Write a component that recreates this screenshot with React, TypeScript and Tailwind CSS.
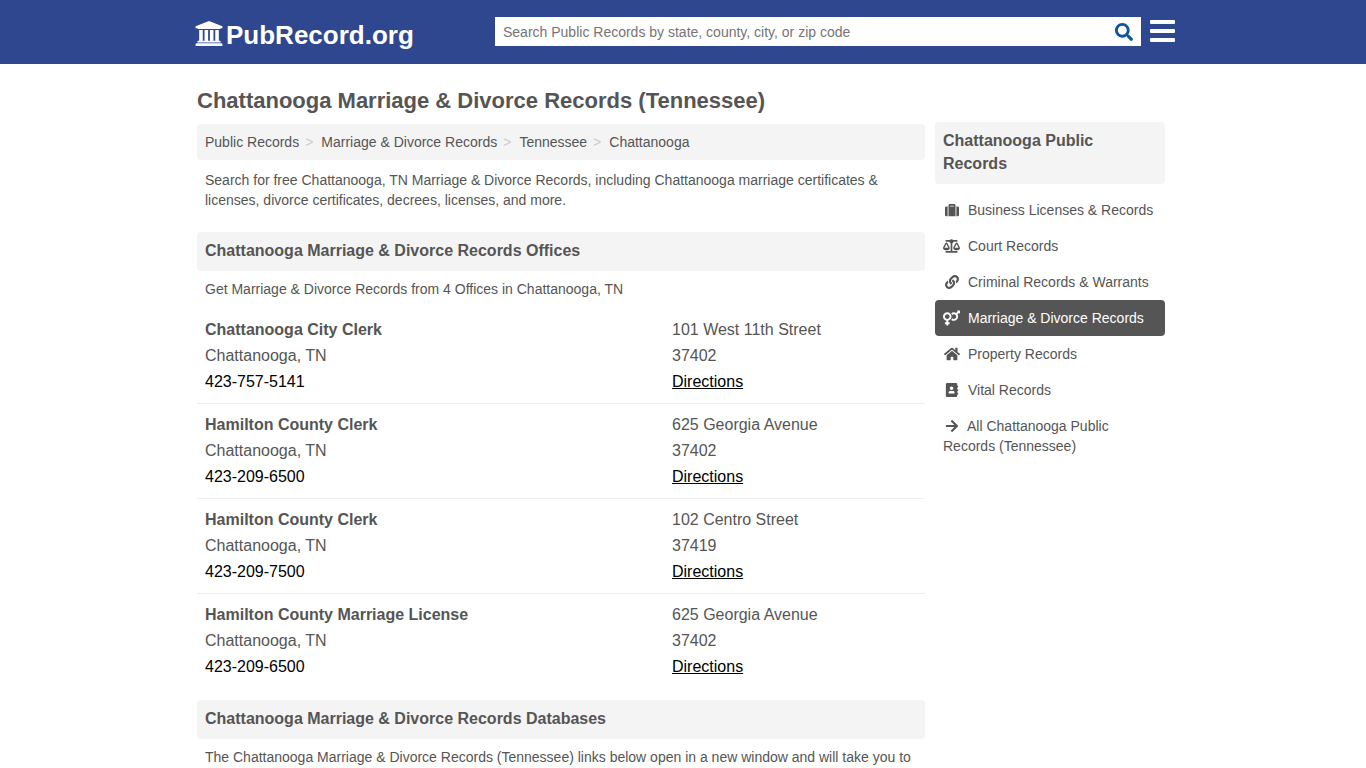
import React from "react";
import type { IconType } from "react-icons";
import {
  FaAddressBook,
  FaArrowRight,
  FaBalanceScale,
  FaHome,
  FaLink,
  FaSearch,
  FaSuitcase,
  FaVenusMars,
} from "react-icons/fa";

type Office = { name: string; phone: string; street: string; zip: string };

const offices: Office[] = [
  { name: "Chattanooga City Clerk", phone: "423-757-5141", street: "101 West 11th Street", zip: "37402" },
  { name: "Hamilton County Clerk", phone: "423-209-6500", street: "625 Georgia Avenue", zip: "37402" },
  { name: "Hamilton County Clerk", phone: "423-209-7500", street: "102 Centro Street", zip: "37419" },
  { name: "Hamilton County Marriage License", phone: "423-209-6500", street: "625 Georgia Avenue", zip: "37402" },
];

const categories: { label: string; icon: IconType; size: string; active?: boolean }[] = [
  { label: "Business Licenses & Records", icon: FaSuitcase, size: "size-[14px]" },
  { label: "Court Records", icon: FaBalanceScale, size: "h-4 w-[17px]" },
  { label: "Criminal Records & Warrants", icon: FaLink, size: "size-[14px]" },
  { label: "Marriage & Divorce Records", icon: FaVenusMars, size: "h-4 w-[17px]", active: true },
  { label: "Property Records", icon: FaHome, size: "size-4" },
  { label: "Vital Records", icon: FaAddressBook, size: "size-[14px]" },
];

const crumbs = ["Public Records", "Marriage & Divorce Records", "Tennessee", "Chattanooga"];

function CourthouseIcon({ className }: { className?: string }) {
  return (
    <svg viewBox="0 0 1920 1792" fill="currentColor" className={className} aria-hidden>
      <path d="M960 0l960 384v128h-128q0 26-20.5 45t-48.5 19h-1526q-28 0-48.5-19t-20.5-45h-128v-128zM256 640h256v768h128v-768h256v768h128v-768h256v768h128v-768h256v768h59q28 0 48.5 19t20.5 45v64h-1664v-64q0-26 20.5-45t48.5-19h59v-768zM1851 1600q28 0 48.5 19t20.5 45v128h-1920v-128q0-26 20.5-45t48.5-19h1782z" />
    </svg>
  );
}

function Header() {
  return (
    <header className="bg-[#2e478f]">
      <div className="mx-auto flex h-16 max-w-[984px] items-start pl-1">
        <a href="#" className="flex w-[300px] shrink-0 items-center gap-[3px] pt-5 text-white">
          <CourthouseIcon className="mb-1 h-[25px] w-7 shrink-0" />
          <span className="text-[26px] leading-[30px] font-bold">PubRecord.org</span>
        </a>
        <form className="mt-[17px] flex h-[29px] min-w-0 flex-1 bg-white" onSubmit={(e) => e.preventDefault()}>
          <input
            type="text"
            aria-label="Search public records"
            placeholder="Search Public Records by state, county, city, or zip code"
            className="min-w-0 flex-1 px-2 text-sm text-[#555] outline-none placeholder:text-[#757575]"
          />
          <button type="submit" aria-label="Search" className="px-2 text-[#0b559f]">
            <FaSearch className="size-[18px]" />
          </button>
        </form>
        <button type="button" aria-label="Menu" className="mt-5 ml-[9px] flex shrink-0 flex-col gap-[5px]">
          <span className="h-1 w-[25px] rounded-[1px] bg-white" />
          <span className="h-1 w-[25px] rounded-[1px] bg-white" />
          <span className="h-1 w-[25px] rounded-[1px] bg-white" />
        </button>
      </div>
    </header>
  );
}

function SectionTitle({ children }: { children: React.ReactNode }) {
  return <h2 className="rounded bg-[#f4f4f4] px-2 pt-[7px] pb-[9px] text-base leading-[23px] font-bold">{children}</h2>;
}

function OfficeRow({ office }: { office: Office }) {
  return (
    <li className="flex border-b border-[#eee] p-2 leading-[26px] last:border-b-0">
      <div className="min-w-0 flex-1">
        <h3 className="font-bold">{office.name}</h3>
        <p>Chattanooga, TN</p>
        <a href={`tel:${office.phone}`} className="text-black">
          {office.phone}
        </a>
      </div>
      <div className="w-[245px] shrink-0">
        <p>{office.street}</p>
        <p>{office.zip}</p>
        <a href="#" className="text-black underline">
          Directions
        </a>
      </div>
    </li>
  );
}

function Sidebar() {
  return (
    <aside className="mt-2 w-[230px] shrink-0">
      <SectionTitle>Chattanooga Public Records</SectionTitle>
      <nav aria-label="Chattanooga Public Records" className="mt-2 text-sm">
        {categories.map(({ label, icon: Icon, size, active }) => (
          <a
            key={label}
            href="#"
            className={
              active
                ? "flex items-center gap-2 rounded bg-[#555] p-2 text-white"
                : "flex items-center gap-2 rounded p-2"
            }
          >
            <span className="flex w-[17px] shrink-0 justify-center">
              <Icon className={size} aria-hidden />
            </span>
            {label}
          </a>
        ))}
        <a href="#" className="block p-2">
          <span className="mr-[6px] inline-flex w-[18px] justify-center align-[-2px]">
            <FaArrowRight className="size-[14px]" aria-hidden />
          </span>
          All Chattanooga Public Records (Tennessee)
        </a>
      </nav>
    </aside>
  );
}

export default function App() {
  return (
    <div className="font-['Liberation_Sans',Arial,sans-serif] text-base text-[#555]">
      <Header />
      <div className="mx-auto flex max-w-[972px] gap-[10px] pt-[50px] pr-1">
        <main className="-mt-[27px] min-w-0 flex-1">
          <h1 className="text-[22px] leading-7 font-bold">Chattanooga Marriage &amp; Divorce Records (Tennessee)</h1>
          <nav aria-label="Breadcrumb" className="mt-[9px] rounded bg-[#f4f4f4] p-2 text-sm">
            <ol className="flex flex-wrap">
              {crumbs.map((crumb, i) => (
                <li key={crumb}>
                  <a href="#">{crumb}</a>
                  {i < crumbs.length - 1 && <span className="mr-2 ml-[6px] text-[#ccc]">&gt;</span>}
                </li>
              ))}
            </ol>
          </nav>
          <p className="mt-[10px] px-2 text-sm">
            Search for free Chattanooga, TN Marriage &amp; Divorce Records, including Chattanooga marriage certificates
            &amp; licenses, divorce certificates, decrees, licenses, and more.
          </p>
          <section className="mt-[22px]">
            <SectionTitle>Chattanooga Marriage &amp; Divorce Records Offices</SectionTitle>
            <p className="mt-2 px-2 text-sm">Get Marriage &amp; Divorce Records from 4 Offices in Chattanooga, TN</p>
            <ul className="mt-[10px]">
              {offices.map((office, i) => (
                <OfficeRow key={i} office={office} />
              ))}
            </ul>
          </section>
          <section className="mt-3">
            <SectionTitle>Chattanooga Marriage &amp; Divorce Records Databases</SectionTitle>
            <p className="mt-2 px-2 text-sm">
              The Chattanooga Marriage &amp; Divorce Records (Tennessee) links below open in a new window and will take
              you to
            </p>
          </section>
        </main>
        <Sidebar />
      </div>
    </div>
  );
}
